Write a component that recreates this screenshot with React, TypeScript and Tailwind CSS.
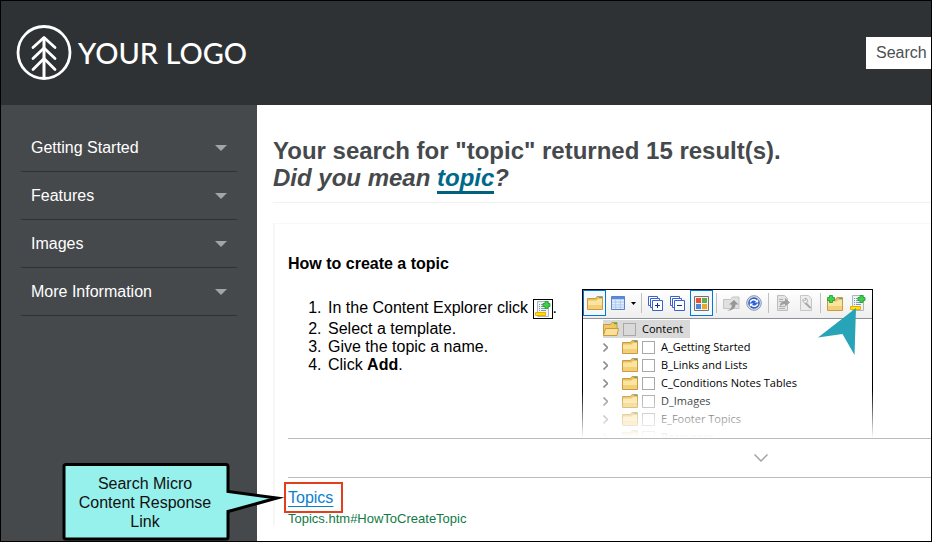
import type { ReactNode } from "react";

const navItems = ["Getting Started", "Features", "Images", "More Information"];
const folders = [
  "A_Getting Started",
  "B_Links and Lists",
  "C_Conditions Notes Tables",
  "D_Images",
  "E_Footer Topics",
  "Resources",
];

function Logo() {
  return (
    <a href="#home" className="flex items-center gap-1.5 text-white">
      <svg viewBox="0 0 56 56" className="size-14" fill="none" stroke="currentColor" aria-hidden="true">
        <circle cx="28" cy="27.500" r="26" strokeWidth="2.800" />
        <path d="M28 53V12" strokeWidth="3" />
        <path
          d="M17 22.500 28 12.500l11 10M17 33.500 28 23l11 10.500M17 44.500 28 33.500l11 11"
          strokeWidth="2.800"
          strokeLinecap="round"
          strokeLinejoin="round"
        />
      </svg>
      <span className="font-[Lato,sans-serif] text-[29px] leading-8 font-medium whitespace-nowrap">YOUR LOGO</span>
    </a>
  );
}

function FolderShape() {
  return (
    <>
      <path d="M.5 2.500h8l1.500-2h5.500v13H.5z" fill="#e9bf5c" stroke="#c99b3c" />
      <path d="M1 4.500h8.500l1.500-1.500h4V13H1z" fill="#fbe3a0" />
      <path d="M1 9h14v4H1z" fill="#f3cf78" />
      <path d="M12 1.500h3" stroke="#3aa9d8" />
    </>
  );
}

function FolderIcon() {
  return (
    <svg viewBox="0 0 16 14" className="h-3.5 w-4 shrink-0" aria-hidden="true">
      <FolderShape />
    </svg>
  );
}

function OpenFolderIcon() {
  return (
    <svg viewBox="0 0 16 14" className="h-3.5 w-4 shrink-0" aria-hidden="true">
      <path d="M.5 12.500v-10h7l1.500-2h5v12z" fill="#efc767" stroke="#c99b3c" />
      <path d="M11 1.500h3" stroke="#3fb848" strokeWidth="1.500" />
      <path d="M2.500 6.500h13l-1.500 7H.5z" fill="#fbe09a" stroke="#c99b3c" />
    </svg>
  );
}

function Plus({ x }: { x: number }) {
  return (
    <path
      d={`M${x} .5h3v2h2v3h-2v2h-3v-2h-2v-3h2z`}
      fill="#3fd04c"
      stroke="#1d9a30"
      strokeWidth="0.800"
    />
  );
}

function NewTopicIcon() {
  return (
    <svg viewBox="0 0 16 16" className="size-4" aria-hidden="true">
      <path d="M2.500.5h11v15h-11z" fill="#eef4f6" stroke="#a9b8bf" />
      <path d="M4 3.500h1m1 0h3M4 5.500h1m1 0h3M4 7.500h1m1 0h5M4 9.500h1m1 0h5" stroke="#8499a3" />
      <Plus x={10} />
      <path d="M.5 11.500h10v3H.5z" fill="#ffe500" stroke="#f2a900" />
    </svg>
  );
}

function NewFolderIcon() {
  return (
    <svg viewBox="0 0 16 16" className="size-4" aria-hidden="true">
      <g transform="translate(0 2)">
        <FolderShape />
      </g>
      <Plus x={2.5} />
    </svg>
  );
}

function TableIcon() {
  return (
    <svg viewBox="0 0 15 15" className="size-3.5" aria-hidden="true">
      <path d="M.5.500h14v14H.5z" fill="#e3effc" stroke="#4a74c4" />
      <path d="M1 1h13v2.500H1z" fill="#5a8ae0" />
      <path d="M1 6.500h13M1 9.500h13M1 12h13M5 4v10M10 4v10" stroke="#a9c7ee" />
    </svg>
  );
}

function StackIcon({ expand }: { expand: boolean }) {
  return (
    <svg viewBox="0 0 15 15" className="size-[15px]" fill="#fff" stroke="#3a63cf" aria-hidden="true">
      <path d="M.5.500h9v9h-9z" />
      <path d="M2.500 2.500h9v9h-9z" />
      <path d="M4.500 4.500h10v10h-10z" />
      <path d={expand ? "M7 9.500h5M9.500 7v5" : "M7 9.500h5"} stroke="#1a2f80" />
    </svg>
  );
}

function GridIcon() {
  return (
    <svg viewBox="0 0 15 15" className="size-[15px]" aria-hidden="true">
      <path d="M.5.500h14v14H.5z" fill="#f4f1ee" stroke="#7d6f66" />
      <path d="M2 2h5v5H2z" fill="#e5513a" />
      <path d="M8 2h5v5H8z" fill="#5fb04c" />
      <path d="M2 8h5v5H2z" fill="#4a86dd" />
      <path d="M8 8h5v5H8z" fill="#f0a52a" />
    </svg>
  );
}

function RefreshIcon() {
  return (
    <svg viewBox="0 0 16 16" className="size-4" fill="none" aria-hidden="true">
      <circle cx="8" cy="8" r="7.300" fill="#dfe3ea" stroke="#8d949e" />
      <circle cx="8" cy="8" r="5.800" fill="#2f5fd0" />
      <path d="M4.200 7.300c.6-2.600 4.300-3.600 6.300-1.500M11.800 8.700c-.6 2.600-4.300 3.600-6.300 1.500" stroke="#fff" strokeWidth="1.500" />
      <path d="M12.200 4v3.600H8.600zM3.800 12V8.400h3.600z" fill="#fff" />
    </svg>
  );
}

function ShareIcon() {
  return (
    <svg viewBox="0 0 17 15" className="h-[15px] w-[17px]" aria-hidden="true">
      <path d="M.5 3.500h7l2-2.500h6.500v11.500H.5z" fill="#e0e0e0" stroke="#c4c4c4" />
      <path d="M4 14.500c4-1 5-3 4.500-6H6L11 4l4.500 4.500H12.500c0 4-3.500 6-8.500 6z" fill="#969696" />
    </svg>
  );
}

function ExportIcon() {
  return (
    <svg viewBox="0 0 15 16" className="h-4 w-[15px]" aria-hidden="true">
      <path d="M1.500.5h7l3 3v12h-10z" fill="#e4e4e4" stroke="#bdbdbd" />
      <path d="M3 4.500h4M3 6.500h3M3 11.500h6M3 13.500h6" stroke="#b0b0b0" />
      <path d="M4 11c0-3 2-5 5-5V3l5 4.500-5 4V9C7 9 5.500 10 4 11z" fill="#a0a0a0" />
    </svg>
  );
}

function WrenchPageIcon() {
  return (
    <svg viewBox="0 0 14 16" className="h-4 w-3.5" fill="none" aria-hidden="true">
      <path d="M1.500.5h8l3 3v12h-11z" fill="#ededed" stroke="#c6c6c6" />
      <path d="M11 12.500 7 8.500" stroke="#a8a8a8" strokeWidth="2" strokeLinecap="round" />
      <path d="M4 4.500 5.500 6 7 4.800 5.800 3.500C8 3 9 5 8 7.500 6 9 3.500 7.500 4 4.500z" fill="#fff" stroke="#a8a8a8" />
    </svg>
  );
}

function ToolButton({ label, className, children }: { label: string; className: string; children: ReactNode }) {
  return (
    <button type="button" aria-label={label} className={`flex h-[26px] items-center justify-center ${className}`}>
      {children}
    </button>
  );
}

function Separator() {
  return <span className="mx-[3px] h-5 w-px bg-[#c0c0c0]" />;
}

function Toolbar() {
  return (
    <div className="flex h-[29px] items-start border-b border-[#8c9199] bg-linear-to-b from-white to-[#eeeeee]">
      <div className="flex items-center">
        <ToolButton label="Open" className="w-[23px] border border-[#0078d7] bg-[#f3f8fd]"><FolderIcon /></ToolButton>
        <ToolButton label="View" className="w-[23px]"><TableIcon /></ToolButton>
        <ToolButton label="View options" className="w-[9px]">
          <svg viewBox="0 0 5 3" className="h-[3px] w-[5px]" aria-hidden="true"><path d="M0 0h5L2.500 3z" /></svg>
        </ToolButton>
        <Separator />
        <ToolButton label="Expand all" className="w-5"><StackIcon expand /></ToolButton>
        <ToolButton label="Collapse all" className="w-[25px]"><StackIcon expand={false} /></ToolButton>
        <ToolButton label="Show all files" className="w-[23px] border border-[#0078d7] bg-[#f3f8fd]"><GridIcon /></ToolButton>
        <Separator />
        <ToolButton label="Open with" className="w-[22px]"><ShareIcon /></ToolButton>
        <ToolButton label="Refresh" className="w-[23px]"><RefreshIcon /></ToolButton>
        <Separator />
        <ToolButton label="Export" className="w-[22px]"><ExportIcon /></ToolButton>
        <ToolButton label="Properties" className="w-[23px]"><WrenchPageIcon /></ToolButton>
        <Separator />
        <ToolButton label="New folder" className="w-[21px]"><NewFolderIcon /></ToolButton>
        <ToolButton label="New topic" className="w-[25px]"><NewTopicIcon /></ToolButton>
      </div>
    </div>
  );
}

function Explorer() {
  return (
    <div className="relative h-[149px] w-[291px] shrink-0 overflow-hidden font-['Open_Sans',sans-serif] text-[11px] text-black">
      <div className="border border-black bg-white">
        <Toolbar />
        <div className="pt-px pl-5">
          <label className="flex h-[18px] w-[87px] items-center gap-1 bg-[#d9d9d9]">
            <OpenFolderIcon />
            <input type="checkbox" className="size-[13px] appearance-none border border-[#a8a8a8]" />
            <span className="pl-0.5">Content</span>
          </label>
          <ul>
            {folders.map((name) => (
              <li key={name} className="flex h-[18px] items-center">
                <svg viewBox="0 0 5 9" className="mr-3.5 h-[9px] w-[5px]" fill="none" stroke="#8f8f8f" strokeWidth="1.600" aria-hidden="true">
                  <path d="m.5.500 4 4-4 4" />
                </svg>
                <label className="flex items-center gap-1">
                  <FolderIcon />
                  <input type="checkbox" className="size-[13px] appearance-none border border-[#a8a8a8] bg-white" />
                  <span className="pl-0.5 whitespace-nowrap">{name}</span>
                </label>
              </li>
            ))}
          </ul>
        </div>
      </div>
      <svg viewBox="0 0 38 47" className="absolute top-[19px] left-[236px] h-[47px] w-[38px]" aria-hidden="true">
        <path d="M38 0 0 29.500 24.500 26 36.500 47z" fill="#27a4b8" />
      </svg>
      <div className="absolute inset-x-0 bottom-0 h-12 bg-linear-to-b from-white/0 to-white" />
    </div>
  );
}

function Callout() {
  return (
    <div className="absolute top-[-22px] right-full h-[79px] w-56">
      <svg viewBox="0 0 224 79" className="absolute inset-0 size-full" aria-hidden="true">
        <path
          d="M4 2.500h160q2 0 2 2v25L215 36 166 49.500V75q0 2-2 2H4q-2 0-2-2V4.500q0-2 2-2z"
          fill="#96f0ec"
          stroke="#000"
          strokeWidth="3"
          strokeMiterlimit="12"
        />
      </svg>
      <p className="relative w-[166px] px-3 pt-3 text-center leading-[19px] text-[#111]">Search Micro Content Response Link</p>
    </div>
  );
}

export default function App() {
  return (
    <div className="flex h-screen flex-col overflow-hidden border border-black bg-white font-['Liberation_Sans',Arial,sans-serif] text-base">
      <header className="flex h-26 shrink-0 items-center justify-between bg-[#2f3235] pl-[15px]">
        <Logo />
        <input
          type="text"
          aria-label="Search"
          placeholder="Search"
          className="h-8 w-[65px] bg-white pl-2.5 text-base placeholder:text-[#4c4f52]"
        />
      </header>
      <div className="flex min-h-0 flex-1">
        <nav className="w-64 shrink-0 bg-[#46494c] px-5 pt-[19px]">
          <ul>
            {navItems.map((item) => (
              <li key={item} className="border-b border-[#2f3235]">
                <a href="#nav" className="flex h-[47px] items-center justify-between px-2.5 text-white">
                  {item}
                  <svg viewBox="0 0 12 6" className="h-1.5 w-3" aria-hidden="true">
                    <path d="M0 0h12L6 6z" fill="#a0a5a8" />
                  </svg>
                </a>
              </li>
            ))}
          </ul>
        </nav>
        <main className="min-w-0 flex-1 pt-8 pl-4">
          <div className="border-b border-[#f1f1f1] pb-[11px] text-2xl leading-[27px] font-bold text-[#46494c]">
            <h1>Your search for "topic" returned 15 result(s).</h1>
            <p className="italic">
              Did you mean{" "}
              <a href="#topic" className="border-b-3 border-[#00627f] text-[#00698a]">topic</a>?
            </p>
          </div>
          <section className="mt-5 border-t border-l-2 border-[#f7f7f7] pl-[13px]">
            <h2 className="pt-[31px] leading-[18px] font-bold text-black">How to create a topic</h2>
            <div className="mt-4 flex border-b border-[#b9bcbe]">
              <ol className="w-[294px] shrink-0 list-decimal pt-2.5 pl-[38px] leading-[18px] text-black">
                <li className="pb-px pl-0.5">
                  In the Content Explorer click{" "}
                  <span className="inline-flex size-5 items-center justify-center border border-black align-middle">
                    <NewTopicIcon />
                  </span>
                  .
                </li>
                <li className="pl-0.5">Select a template.</li>
                <li className="pl-0.5">Give the topic a name.</li>
                <li className="pl-0.5">Click <b>Add</b>.</li>
              </ol>
              <Explorer />
            </div>
            <button type="button" aria-label="Expand" className="flex h-[39px] w-full items-center border-b border-[#b9bcbe] pl-[466px]">
              <svg viewBox="0 0 14 8" className="h-2 w-3.5" fill="none" stroke="#a0a5a8" strokeWidth="1.500" aria-hidden="true">
                <path d="m.5.500 6.500 6.500L13.500.500" />
              </svg>
            </button>
            <div className="relative mt-1 -ml-1 w-fit border-2 border-[#e2401c] pt-[5px] pr-2 pb-1 pl-0.5 leading-[18px]">
              <a href="#topics" className="text-[#0a7fd0] underline underline-offset-3">Topics</a>
              <Callout />
            </div>
            <p className="-mt-0.5 text-[13px] leading-[15px] text-[#0f7a45]">Topics.htm#HowToCreateTopic</p>
          </section>
        </main>
      </div>
    </div>
  );
}
